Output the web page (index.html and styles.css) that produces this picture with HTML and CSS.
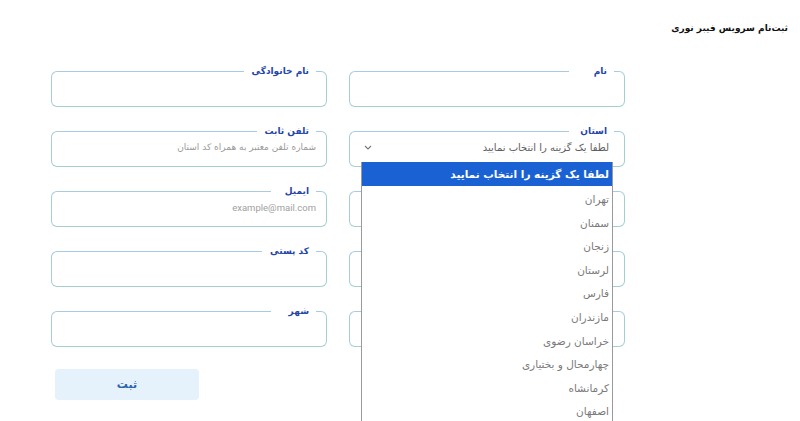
FILE: index.html
```html
<!DOCTYPE html>
<html lang="fa" dir="rtl">
<head>
<meta charset="utf-8">
<title>ثبت‌نام سرویس فیبر نوری</title>
<link rel="stylesheet" href="styles.css">
</head>
<body>
<div class="page">
  <h1 class="title">ثبت‌نام سرویس فیبر نوری</h1>
  <form class="form">
    <div class="grid">
      <fieldset class="field"><legend>نام</legend><input class="input" type="text"></fieldset>
      <fieldset class="field"><legend>نام خانوادگی</legend><input class="input" type="text"></fieldset>

      <fieldset class="field select-field"><legend>استان</legend>
        <div class="select">
          <span class="select-text">لطفا یک گزینه را انتخاب نمایید</span>
          <svg class="chevron" width="8" height="5" viewBox="0 0 8 5"><path d="M1 1l3 3 3-3" fill="none" stroke="#777" stroke-width="1.1"/></svg>
        </div>
        <ul class="dropdown">
          <li class="opt selected">لطفا یک گزینه را انتخاب نمایید</li>
          <li class="opt first">تهران</li>
          <li class="opt">سمنان</li>
          <li class="opt">زنجان</li>
          <li class="opt">لرستان</li>
          <li class="opt">فارس</li>
          <li class="opt">مازندران</li>
          <li class="opt">خراسان رضوی</li>
          <li class="opt">چهارمحال و بختیاری</li>
          <li class="opt">کرمانشاه</li>
          <li class="opt">اصفهان</li>
        </ul>
      </fieldset>
      <fieldset class="field"><legend>تلفن ثابت</legend><input class="input" type="text" placeholder="شماره تلفن معتبر به همراه کد استان"></fieldset>

      <fieldset class="field"><legend class="blank"></legend><input class="input" type="text"></fieldset>
      <fieldset class="field"><legend>ایمیل</legend><input class="input ltr" type="text" placeholder="example@mail.com"></fieldset>

      <fieldset class="field"><legend class="blank"></legend><input class="input" type="text"></fieldset>
      <fieldset class="field"><legend>کد پستی</legend><input class="input" type="text"></fieldset>

      <fieldset class="field"><legend class="blank"></legend><input class="input" type="text"></fieldset>
      <fieldset class="field"><legend>شهر</legend><input class="input" type="text"></fieldset>
    </div>
    <div class="actions">
      <button class="submit" type="button">ثبت</button>
    </div>
  </form>
</div>
</body>
</html>
```

FILE: styles.css
```css
* { box-sizing: border-box; }
html, body {
  margin: 0;
  padding: 0;
  background: #ffffff;
  font-family: "DejaVu Sans", sans-serif;
  overflow: hidden;
}
.page {
  width: 800px;
  height: 421px;
  padding: 20px 12px 0 0;
}
.title {
  margin: 0;
  font-size: 9px;
  font-weight: bold;
  color: #111;
  line-height: 16px;
}
.form {
  width: 574px;
  margin: 28px 163px 0 0;
}
.grid {
  display: grid;
  grid-template-columns: 276px 276px;
  grid-auto-rows: 43px;
  column-gap: 22px;
  row-gap: 17px;
}
.field {
  position: relative;
  margin: 0;
  height: 43px;
  padding: 0 10px 6px 12px;
  border: 1.5px solid #a6cbe3;
  border-right-color: #a2cfd0;
  border-bottom-color: #a6cfcc;
  border-radius: 6px;
  min-width: 0;
}
.field legend {
  min-width: 45px;
  padding: 0 7px 0 8px;
  margin: 0;
  font-size: 9px;
  font-weight: bold;
  color: #2445a8;
  line-height: 14px;
  height: 14px;
  text-align: right;
}
.field legend.blank {
  min-width: 0;
  width: 0;
  padding: 0;
}
.input {
  display: block;
  width: 100%;
  height: 26px;
  margin-top: -4px;
  border: 0;
  outline: none;
  background: transparent;
  font-family: "DejaVu Sans", sans-serif;
  font-size: 9px;
  color: #555;
  padding: 0;
  text-align: right;
}
.input::placeholder { color: #9a9a9a; }
.input.ltr {
  direction: ltr;
  text-align: right;
  font-family: Roboto, "Liberation Sans", sans-serif;
  font-size: 9.5px;
}
.input.ltr::placeholder { color: #a0a0a0; }
.select {
  display: flex;
  align-items: center;
  justify-content: space-between;
  height: 26px;
  margin-top: -4px;
  padding-right: 5px;
  padding-left: 2px;
}
.select-text {
  font-size: 10px;
  color: #5e5e5e;
}
.chevron { display: block; }
.dropdown {
  position: absolute;
  top: 24px;
  right: 11px;
  width: 252px;
  margin: 0;
  padding: 0 0 20px;
  list-style: none;
  background: #fff;
  border-left: 1px solid #9a9a9a;
  border-right: 1px solid #9a9a9a;
  z-index: 10;
}
.opt {
  height: 23.6px;
  line-height: 23.6px;
  padding-right: 3px;
  font-size: 10.5px;
  color: #7a7a7a;
  white-space: nowrap;
}
.opt.first { margin-top: 2px; }
.opt.selected {
  height: 24px;
  line-height: 24px;
  background: #1a62d3;
  color: #fff;
  font-weight: bold;
}
.actions {
  display: flex;
  justify-content: flex-end;
  margin-top: 22px;
  padding-left: 4px;
}
.submit {
  width: 144px;
  height: 31px;
  border: 0;
  border-radius: 4px;
  background: #e5f1fb;
  color: #2c63ae;
  font-family: "DejaVu Sans", sans-serif;
  font-size: 11px;
  font-weight: bold;
}
```
